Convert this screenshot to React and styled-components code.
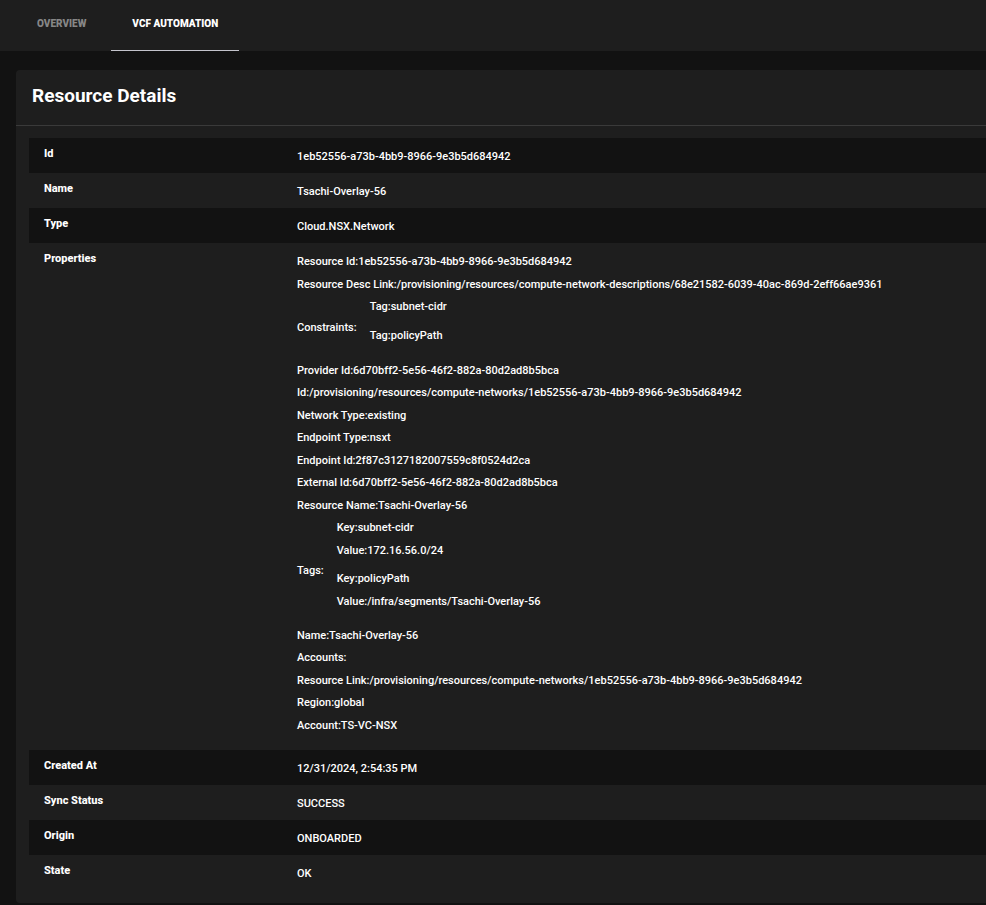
import React from "react";
import { useState } from "react";
import styled, { createGlobalStyle } from "styled-components";


const GlobalStyle = createGlobalStyle`
    * {
        box-sizing: border-box;
    }

    body {
        margin: 0;
        background: #121212;
        color: #ffffff;
        font-family: Roboto, "Liberation Sans", sans-serif;
        font-size: 11px;
    }
`

const TabBar = styled.nav`
    display: flex;
    gap: 4px;
    height: 51px;
    padding-left: 16px;
    background: #1e1e1e;
`

const Tab = styled.button`
    padding: 0 21px 4px;
    border: 0;
    border-bottom: 1px solid ${({ $active }) => ($active ? "#c4c4cc" : "transparent")};
    background: none;
    color: ${({ $active }) => ($active ? "#ffffff" : "#868686")};
    font-family: inherit;
    font-size: 10px;
    font-weight: 900;
    text-transform: uppercase;
    cursor: pointer;
`

const Panel = styled.section`
    margin: 19px 0 2px 16px;
    padding-bottom: 13px;
    border-radius: 4px 0 0 4px;
    background: #1e1e1e;
`

const PanelHeader = styled.header`
    padding: 14px 16px 17px;
    border-bottom: 1px solid #3a3a3a;
`

const Title = styled.h1`
    margin: 0;
    font-size: 19px;
    line-height: 24px;
    font-weight: 700;
`

const TableWrap = styled.div`
    padding: 12px 0 0 13px;
`

const DetailsTable = styled.table`
    width: 100%;
    table-layout: fixed;
    border-collapse: collapse;
`

const Row = styled.tr`
    &:nth-child(odd) {
        background: #121212;
    }
`

const Label = styled.th`
    width: 268px;
    padding: 8px 15px 6px;
    vertical-align: top;
    text-align: left;
    line-height: 16px;
    font-weight: 800;
`

const Value = styled.td`
    padding: 8px 15px 5px 0;
    vertical-align: top;
    line-height: 22px;
    font-weight: 500;
`

const PropertyList = styled.ul`
    display: grid;
    grid-auto-rows: minmax(23px, auto) minmax(22px, auto);
    margin: 0;
    padding: 0 0 8px;
    list-style: none;
`

const Group = styled.li`
    display: flex;
    align-items: center;
    gap: 13px;
`

const GroupItems = styled.ul`
    margin: 0;
    padding: 0 0 6px;
    list-style: none;
`

const GroupItem = styled.li`
    display: grid;
    grid-auto-rows: 23px 22px;
    padding-bottom: 6px;
`

const properties = [
    { name: "Resource Id", value: "1eb52556-a73b-4bb9-8966-9e3b5d684942" },
    { name: "Resource Desc Link", value: "/provisioning/resources/compute-network-descriptions/68e21582-6039-40ac-869d-2eff66ae9361" },
    { name: "Constraints", items: [["Tag:subnet-cidr"], ["Tag:policyPath"]] },
    { name: "Provider Id", value: "6d70bff2-5e56-46f2-882a-80d2ad8b5bca" },
    { name: "Id", value: "/provisioning/resources/compute-networks/1eb52556-a73b-4bb9-8966-9e3b5d684942" },
    { name: "Network Type", value: "existing" },
    { name: "Endpoint Type", value: "nsxt" },
    { name: "Endpoint Id", value: "2f87c3127182007559c8f0524d2ca" },
    { name: "External Id", value: "6d70bff2-5e56-46f2-882a-80d2ad8b5bca" },
    { name: "Resource Name", value: "Tsachi-Overlay-56" },
    {
        name: "Tags",
        items: [
            ["Key:subnet-cidr", "Value:172.16.56.0/24"],
            ["Key:policyPath", "Value:/infra/segments/Tsachi-Overlay-56"],
        ],
    },
    { name: "Name", value: "Tsachi-Overlay-56" },
    { name: "Accounts", value: "" },
    { name: "Resource Link", value: "/provisioning/resources/compute-networks/1eb52556-a73b-4bb9-8966-9e3b5d684942" },
    { name: "Region", value: "global" },
    { name: "Account", value: "TS-VC-NSX" },
]

function Properties(){
    return(
        <PropertyList>
            {properties.map(({ name, value, items }) =>
                items ? (
                    <Group key={name}>
                        <span>{name}:</span>
                        <GroupItems>
                            {items.map((lines) => (
                                <GroupItem key={lines[0]}>
                                    {lines.map((line) => <div key={line}>{line}</div>)}
                                </GroupItem>
                            ))}
                        </GroupItems>
                    </Group>
                ) : (
                    <li key={name}>{`${name}:${value}`}</li>
                )
            )}
        </PropertyList>
    )
}

const details = [
    ["Id", "1eb52556-a73b-4bb9-8966-9e3b5d684942"],
    ["Name", "Tsachi-Overlay-56"],
    ["Type", "Cloud.NSX.Network"],
    ["Properties", <Properties />],
    ["Created At", "12/31/2024, 2:54:35 PM"],
    ["Sync Status", "SUCCESS"],
    ["Origin", "ONBOARDED"],
    ["State", "OK"],
]

const tabs = ["Overview", "VCF Automation"]

export default function App(){

    const [activeTab, setActiveTab] = useState("VCF Automation");

    return(
        <>
            <GlobalStyle />
            <TabBar>
                {tabs.map((tab) => (
                    <Tab key={tab} type="button" $active={tab === activeTab} onClick={() => setActiveTab(tab)}>
                        {tab}
                    </Tab>
                ))}
            </TabBar>
            <Panel>
                <PanelHeader>
                    <Title>Resource Details</Title>
                </PanelHeader>
                <TableWrap>
                    <DetailsTable>
                        <tbody>
                            {details.map(([label, value]) => (
                                <Row key={label}>
                                    <Label scope="row">{label}</Label>
                                    <Value>{value}</Value>
                                </Row>
                            ))}
                        </tbody>
                    </DetailsTable>
                </TableWrap>
            </Panel>
        </>
    )
}
